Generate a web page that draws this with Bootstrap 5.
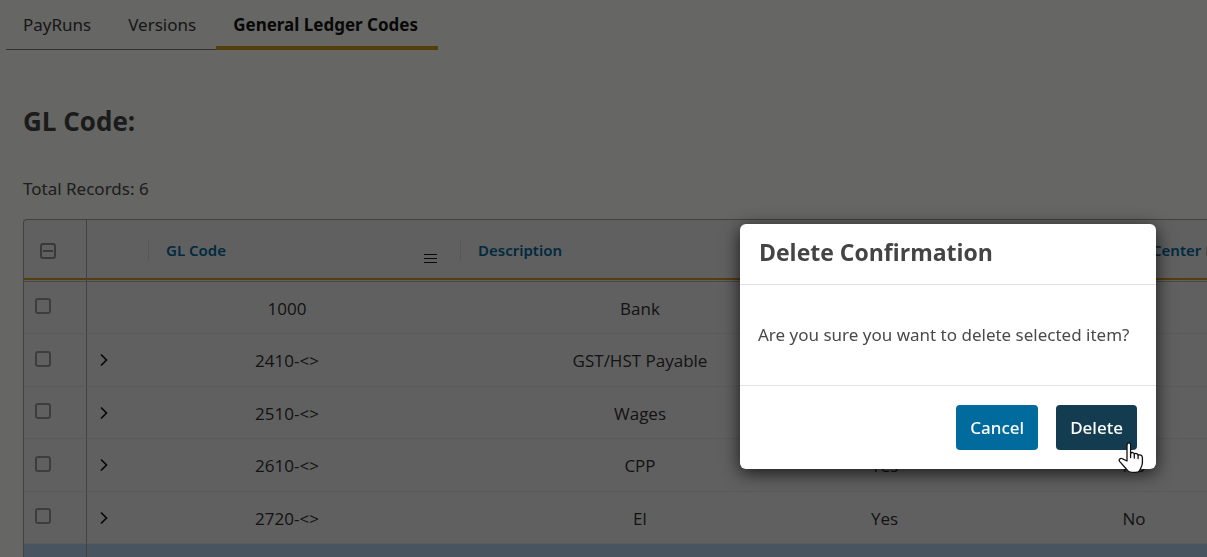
<!DOCTYPE html>
<html lang="en">
<head>
<meta charset="utf-8">
<meta name="viewport" content="width=device-width, initial-scale=1">
<title>General Ledger Codes</title>
<link href="https://cdn.jsdelivr.net/npm/bootstrap@5.3.0/dist/css/bootstrap.min.css" rel="stylesheet">
<style>
  body { background: #fefefa; color: #4a4a4a; font-family: "Noto Sans", sans-serif; font-size: 17px; overflow: hidden; }
  .page-tabs { padding-left: 6px; }
  .page-tabs .nav-link { color: #3a3a3a; padding: 12px 20px 12px 17px; line-height: 25px; border-bottom: 1px solid #808080; }
  .page-tabs .nav-link.active { color: #141414; font-weight: 700; border-bottom: 4px solid #d09c20; padding-bottom: 9px; }
  .page-title { font-family: "Open Sans", sans-serif; font-size: 26px; font-weight: 700; line-height: 36px; margin: 53px 0 0; color: #444; }
  .page-body { padding-left: 23px; }
  .record-count { margin: 37px 0 17px; line-height: 26px; }
  .code-grid { background: #f0f0f0; border: 1px solid #a4a4a4; border-right: 0; border-bottom: 0; border-top-left-radius: 4px; overflow: hidden; }
  .code-grid table { table-layout: fixed; width: 1235px; border-collapse: separate; border-spacing: 0; }
  .code-grid th { height: 62px; padding: 0 17px 2px; font-size: 15px; font-weight: 600; color: #00699b; border-bottom: 1px solid #b4b4b4; white-space: nowrap; box-shadow: inset 0 -1px #f0f0f0, inset 0 -3px #d09c20; vertical-align: middle; }
  .head-cell { height: 20px; line-height: 20px; border-left: 1px solid #d8d8d8; margin-left: -17px; padding-left: 17px; }
  .code-grid td { height: 52px; padding: 2px 0 0; text-align: center; vertical-align: middle; color: #303030; font-family: "Open Sans", sans-serif; font-size: 17px; border-bottom: 1px solid #e0e0e0; line-height: 24px; }
  .code-grid tr:nth-child(even) td { height: 53px; }
  .code-grid .pick { border-right: 1px solid #a4a4a4; padding: 0 0 3px 11px; text-align: left; }
  .code-grid th.pick { padding: 0 0 0 16px; }
  .code-grid td.code { padding-right: 34px; }
  .code-grid td.desc { padding-left: 60px; }
  .code-grid td.open-row { text-align: left; padding: 0 0 0 10px; }
  .code-grid th.center-no { padding-left: 143px; line-height: 20px; }
  .code-grid tr.chosen td { background: #b4d2f0; }
  .pick .form-check-input { width: 16px; height: 16px; margin: 0; display: block; border: 2px solid #9a9a9a; border-radius: 3px; background-color: transparent; }
  .pick .form-check-input:indeterminate { background-color: transparent; border-color: #909090; background-image: linear-gradient(#909090, #909090); background-size: 10px 2px; }
  .plain-btn { background: none; border: 0; padding: 0; display: block; line-height: 0; color: #141414; }
  .menu-spot { margin: 14px 5px 0 0; }
  .modal-backdrop { --bs-backdrop-opacity: .6; }
  .confirm-dialog { width: 416px; max-width: 416px; margin: 224px 51px 0 auto; }
  .confirm-dialog .modal-content { border: 0; border-radius: 6px; box-shadow: 0 4px 18px rgba(0,0,0,.75); }
  .confirm-dialog .modal-header { padding: 12px 19px 16px; border-color: #dfe3e3; }
  .confirm-dialog .modal-title { font-family: "Open Sans", sans-serif; font-size: 23px; line-height: 32px; font-weight: 700; color: #444; }
  .confirm-dialog .modal-body { padding: 37px 18px; line-height: 26px; color: #4a4a4a; white-space: nowrap; }
  .confirm-dialog .modal-footer { padding: 19px 19px; gap: 18px; border-color: #dfe3e3; }
  .confirm-dialog .btn { margin: 0; border: 0; padding: 10px 14px; font-size: 17px; line-height: 25px; border-radius: 4px; color: #fff; background: #006b9c; font-weight: 500; }
  .confirm-dialog .btn-delete { background: #143c50; }
  .hand { position: absolute; right: 12px; bottom: -5px; pointer-events: none; }
</style>
</head>
<body>
<nav class="nav page-tabs">
  <a class="nav-link" href="#">PayRuns</a>
  <a class="nav-link" href="#">Versions</a>
  <a class="nav-link active" href="#" aria-current="page">General Ledger Codes</a>
</nav>
<main class="page-body">
  <h1 class="page-title">GL Code:</h1>
  <p class="record-count">Total Records: 6</p>
  <div class="code-grid">
    <table>
      <colgroup><col style="width:63px"><col style="width:61px"><col style="width:312px"><col style="width:300px"><col style="width:249px"><col style="width:250px"></colgroup>
      <thead>
        <tr>
          <th class="pick"><input class="form-check-input" type="checkbox" id="all" aria-label="Select all"></th>
          <th></th>
          <th><div class="head-cell d-flex justify-content-between"><span>GL Code</span>
            <button class="plain-btn menu-spot" type="button" aria-label="Column menu"><svg width="14" height="10" viewBox="0 0 14 10" stroke="currentColor"><path d="M0 .5h13M0 4.500h13M0 8.500h13"/></svg></button></div></th>
          <th><div class="head-cell">Description</div></th>
          <th></th>
          <th class="center-no">Center No</th>
        </tr>
      </thead>
      <tbody>
        <tr><td class="pick"><input class="form-check-input" type="checkbox" aria-label="Select 1000"></td><td></td><td class="code">1000</td><td class="desc">Bank</td><td></td><td></td></tr>
        <tr><td class="pick"><input class="form-check-input" type="checkbox" aria-label="Select 2410"></td><td class="open-row"><button class="plain-btn" type="button" aria-label="Expand"><svg width="14" height="14" viewBox="0 0 14 14" fill="none" stroke="currentColor" stroke-width="1.700"><path d="M4 1.500l5.500 5.500L4 12.500"/></svg></button></td><td class="code">2410-&lt;&gt;</td><td class="desc">GST/HST Payable</td><td></td><td></td></tr>
        <tr><td class="pick"><input class="form-check-input" type="checkbox" aria-label="Select 2510"></td><td class="open-row"><button class="plain-btn" type="button" aria-label="Expand"><svg width="14" height="14" viewBox="0 0 14 14" fill="none" stroke="currentColor" stroke-width="1.700"><path d="M4 1.500l5.500 5.500L4 12.500"/></svg></button></td><td class="code">2510-&lt;&gt;</td><td class="desc">Wages</td><td></td><td></td></tr>
        <tr><td class="pick"><input class="form-check-input" type="checkbox" aria-label="Select 2610"></td><td class="open-row"><button class="plain-btn" type="button" aria-label="Expand"><svg width="14" height="14" viewBox="0 0 14 14" fill="none" stroke="currentColor" stroke-width="1.700"><path d="M4 1.500l5.500 5.500L4 12.500"/></svg></button></td><td class="code">2610-&lt;&gt;</td><td class="desc">CPP</td><td>Yes</td><td>No</td></tr>
        <tr><td class="pick"><input class="form-check-input" type="checkbox" aria-label="Select 2720"></td><td class="open-row"><button class="plain-btn" type="button" aria-label="Expand"><svg width="14" height="14" viewBox="0 0 14 14" fill="none" stroke="currentColor" stroke-width="1.700"><path d="M4 1.500l5.500 5.500L4 12.500"/></svg></button></td><td class="code">2720-&lt;&gt;</td><td class="desc">EI</td><td>Yes</td><td>No</td></tr>
        <tr class="chosen"><td class="pick"></td><td></td><td></td><td></td><td></td><td></td></tr>
      </tbody>
    </table>
  </div>
</main>
<div class="modal-backdrop show"></div>
<div class="modal d-block overflow-hidden" role="dialog" aria-modal="true" aria-labelledby="confirmTitle">
  <div class="modal-dialog confirm-dialog">
    <div class="modal-content">
      <div class="modal-header"><h2 class="modal-title" id="confirmTitle">Delete Confirmation</h2></div>
      <div class="modal-body">Are you sure you want to delete selected item?</div>
      <div class="modal-footer">
        <button class="btn" type="button">Cancel</button>
        <button class="btn btn-delete" type="button">Delete</button>
      </div>
      <svg class="hand" width="26" height="32" viewBox="0 0 26 32" fill="#fff" stroke="#111" stroke-width="1.300" stroke-linejoin="round" stroke-linecap="round"><path d="M9 19V3c0-2.800 3.600-2.800 3.600 0v8.200c1.200-1.200 3.500-.800 3.700.8 1.200-1 3.500-.600 3.800 1.200 1.800-1 4.300 0 4.300 2.400v5.200c0 3-1.600 4.800-2.200 6.600-.6 2-2.200 3-4.400 3h-4c-2 0-3.600-.900-4.600-2.400L1.600 19.400C.4 17.400 2.400 15.600 4.600 16.800z"/><path d="M12.600 11v4.500M16.300 12v4M20.100 13v3.500" fill="none"/></svg>
    </div>
  </div>
</div>
<script src="https://cdn.jsdelivr.net/npm/bootstrap@5.3.0/dist/js/bootstrap.bundle.min.js"></script>
<script>document.getElementById('all').indeterminate = true;</script>
</body>
</html>
